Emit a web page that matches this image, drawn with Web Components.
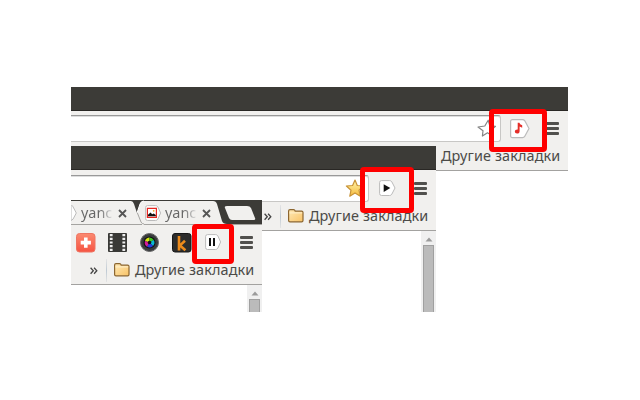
<!DOCTYPE html>
<html lang="ru"><head><meta charset="utf-8"><title>Панель браузера</title>
<style>html,body{margin:0;background:#fff;width:640px;height:400px;overflow:hidden;font-family:"Noto Sans","Open Sans",sans-serif}</style></head>
<body><desk-top></desk-top>
<script>
const ICONS={
menu:[13,13,'<g fill="#51504d"><rect width="13" height="3" rx="1"/><rect y="5" width="13" height="3" rx="1"/><rect y="10" width="13" height="3" rx="1"/></g>'],
note:[20,20,'<path d="M2.5 .6H12.5Q14 .6 14.8 1.8L19 9.5 14.8 17.2Q14 18.6 12.5 18.6H2.5Q.6 18.6.6 16.6V2.6Q.6.6 2.5.6Z" fill="#fff" stroke="#bbb" stroke-width="1.2"/><path d="M7.7 3.7H9.4Q9.6 5.4 12.2 6.2V8.7L9.6 7.6V12Q9.6 14.6 7 14.6 4.8 14.6 4.8 12.5 4.8 10.2 7.7 10.4Z" fill="#e52e28"/>'],
play:[17,17,'<path d="M2.5.6H10.6Q12 .6 12.8 1.8L16 8 12.8 14.2Q12 15.5 10.6 15.5H2.5Q.6 15.5.6 13.5V2.6Q.6.6 2.5.6Z" fill="#fff" stroke="#bbb"/><path d="M4.7 4.3V12L11.3 8.1Z" fill="#111"/>'],
pause:[17,17,'<path d="M2.5.6H10.6Q12 .6 12.8 1.8L15.6 8 12.8 14.2Q12 15.5 10.6 15.5H2.5Q.6 15.5.6 13.5V2.6Q.6.6 2.5.6Z" fill="#fff" stroke="#bbb"/><path d="M4 4h2v8H4zM8 4h2v8H8z" fill="#111"/>'],
star:[20,19,'<path d="M11.2 1.2 12.8 6.8 18.5 7.3 14.2 11 15.6 16.9 10.5 13.8 5.4 17 6 11.7 1 8 7.8 7Z" fill="#fff" stroke="#858585" stroke-width="1.2" stroke-linejoin="round"/>'],
gold:[20,19,'<defs><linearGradient id="g" x2="0" y2="1"><stop stop-color="#fff6ad"/><stop offset="1" stop-color="#f5b93c"/></linearGradient></defs><path d="M10 1 12.3 6.5 18.4 7 14 11.2 15.3 17.2 10 14 4.8 17.2 6 11.2 1.4 7 7.6 6.5Z" fill="url(#g)" stroke="#c89236" stroke-width="1.2" stroke-linejoin="round"/>'],
folder:[16,14,'<defs><linearGradient id="f" x2="1" y2="1"><stop stop-color="#ffeab7"/><stop offset="1" stop-color="#f8c265"/></linearGradient></defs><path d="M.6 2Q.6.6 2 .6H5.6Q6.8.6 7.2 2.2H13.6Q15 2.2 15 3.6V11.4Q15 12.8 13.6 12.8H2Q.6 12.8.6 11.4Z" fill="url(#f)" stroke="#8c6630" stroke-width="1.2"/><path d="M1.4 3.9H14.2" stroke="#fff0cb"/>'],
plus:[20,20,'<defs><linearGradient id="p" x2="0" y2="1"><stop stop-color="#fb8a70"/><stop offset="1" stop-color="#f65342"/></linearGradient></defs><rect x=".5" y=".5" width="18.5" height="18.5" rx="3" fill="url(#p)" stroke="#ee7562"/><path d="M8 4.5h3.6v3.3h3.3v3.6h-3.3v3.3H8v-3.3H4.7V7.8H8z" fill="#fff"/>'],
film:[20,20,'<rect width="19" height="19" rx="1" fill="#393936"/><path d="M3.2 1v17M15.8 1v17" stroke="#eee" stroke-width="2.8" stroke-dasharray="2.2 1.5"/>'],
camera:[20,20,'<circle cx="9.5" cy="9.5" r="9" fill="#3a3c3e" stroke="#666"/><circle cx="9.5" cy="9.5" r="6" fill="#111"/><path d="M9.5 9.5V4.5A5 5 0 0 0 5 8Z" fill="#d6e512"/><path d="M9.5 9.5V4.5A5 5 0 0 1 13.7 7Z" fill="#41c823"/><path d="M9.5 9.5 13.7 7A5 5 0 0 1 13 13Z" fill="#09b7d2"/><path d="M9.5 9.5 13 13A5 5 0 0 1 7 13.7Z" fill="#263de0"/><path d="M9.5 9.5 7 13.7A5 5 0 0 1 5 8Z" fill="#d51b9b"/><circle cx="9.5" cy="9.5" r="1.8" fill="#111"/>'],
k:[20,20,'<rect x=".5" y=".5" width="18.5" height="18.5" rx="2.5" fill="#2d2d2c" stroke="#171717"/><path d="M7 3V17.5M13 7.8 8 12.4 13.4 17.3" fill="none" stroke="#ed8b1b" stroke-width="2.6"/>'],
pic:[17,17,'<path d="M2.5.6H10.6Q12 .6 12.8 1.8L15.6 8 12.8 14.2Q12 15.5 10.6 15.5H2.5Q.6 15.5.6 13.5V2.6Q.6.6 2.5.6Z" fill="#fff" stroke="#bbb"/><path d="M2.4 3.4h9v9h-9z" fill="#fff" stroke="#e52620" stroke-width="1.2"/><path d="M3 11.3V9.8L5.5 7.5 7.2 9.3 8.7 8.5 10.8 10V11.3Z" fill="#111"/><circle cx="8.7" cy="5.8" r=".9" fill="#eda52c"/>'],
edge:[6,17,'<path d="M0 0H.5Q1.5.5 2 1.8L5.3 8 2 14.2 0 15.5Z" fill="#fff" stroke="#bbb"/>'],
close:[9,9,'<path d="M1 1 8 8M8 1 1 8" stroke="#555" stroke-width="1.8"/>'],
chev:[8,8,'<path d="M.6.8 3.3 3.8.6 6.8M4.1.8 6.8 3.8 4.1 6.8" fill="none" stroke="#444" stroke-width="1.3"/>'],
up:[8,5,'<path d="M4 .5 7.5 4.5H.5Z" fill="#9b9b9b"/>']};
const def=(n,f)=>customElements.define(n,class extends HTMLElement{connectedCallback(){if(!this.shadowRoot)this.attachShadow({mode:'open'}).innerHTML=f(this)}});
def('ui-icon',e=>{const[w,h,p]=ICONS[e.getAttribute('name')];return`<style>:host{display:block;flex:none}svg{display:block}</style><svg width="${w}" height="${h}" viewBox="0 0 ${w} ${h}">${p}</svg>`});
def('tool-bar',()=>`<style>:host{display:flex;height:31px;padding-right:9px;box-sizing:border-box;align-items:flex-start;justify-content:flex-end;background:#f1f0ee}</style><slot></slot>`);
def('omni-box',()=>`<style>:host{display:flex;flex:1;box-sizing:border-box;height:27px;margin-top:4px;padding:3px 3px 0 0;justify-content:flex-end;background:#fff;border:1px solid #c8c7c5;border-left:0;border-top-color:#999;border-radius:0 3px 3px 0;box-shadow:inset 0 1px #ddd}</style><slot></slot>`);
def('book-marks',e=>`<style>:host{display:flex;height:29px;box-sizing:border-box;border-bottom:1px solid #a3a2a0;background:#f1f0ee;padding-right:8px;align-items:flex-start;justify-content:flex-end;color:#4c4b48;font-size:14.4px}
span{line-height:20px;padding-top:4px;width:119px;white-space:nowrap;letter-spacing:.13px}i{width:1px;height:23px;margin:3px 7px 0 8px;background:linear-gradient(#e4e4e4,#bfcad4,#e4e4e4)}.c{margin-top:11px}.f{margin:7px 5px 0 0}</style>${e.hasAttribute('folder')?'<ui-icon class="c" name="chev"></ui-icon><i></i><ui-icon class="f" name="folder"></ui-icon>':''}<span><slot></slot></span>`);
def('scroll-page',()=>`<style>:host{display:flex;flex:1;justify-content:flex-end;background:#fff}div{width:15px;display:flex;flex-direction:column;align-items:center;background:#f0f0f0;padding-top:6px;box-sizing:border-box}b{flex:1;width:11px;margin-top:3px;background:#bbb;border:1px solid #a0a0a0;border-bottom:0;box-sizing:border-box}</style><div><ui-icon name="up"></ui-icon><b></b></div>`);
def('tab-strip',()=>`<style>:host{display:grid;height:25px;background:#3c3b37}svg,.r{grid-area:1/1}.r{display:flex;align-items:flex-start;font-size:14.4px}span{line-height:20px;margin-top:3px;width:31px;overflow:hidden;white-space:nowrap;background:linear-gradient(90deg,#666 60%,#ddd);-webkit-background-clip:text;color:transparent}.x{margin:9px 0 0 6px}.a{margin:5px 4px 0 0}.b{margin:5px 3px 0 18px}</style>
<svg width="191" height="25"><path d="M0 1H60Q62 1 63 4L66 13 69 4Q70 1 73 1H142Q145 1 146 4L151 21Q152 24 156 24H191V25H0Z" fill="#f1f0ee"/><path d="M66 12 70 22Q71 24 73 24M0 24.5H71M73 24.5H191" fill="none" stroke="#a5a4a1"/><path d="M66 13 69 4Q70 1 73 1" fill="none" stroke="#fff"/><path d="M156 6H176Q179 6 180 8L184 18Q185 20 182 20H161Q159 20 158 18L154 8Q153 6 156 6Z" fill="#f1f0ee"/></svg>
<div class="r"><ui-icon class="a" name="edge"></ui-icon><span>yanc</span><ui-icon class="x" name="close"></ui-icon><ui-icon class="b" name="pic"></ui-icon><span>yanc</span><ui-icon class="x" name="close"></ui-icon></div>`);
def('title-bar',()=>`<style>:host{display:block;height:24px;box-sizing:border-box;background:#3c3b37;border-bottom:1px solid #292724}</style>`);
def('browser-window',()=>`<style>:host{display:flex;flex-direction:column;overflow:hidden;background:#fff}</style><slot></slot>`);
def('mark-box',()=>`<style>:host{display:block;box-sizing:border-box;border:5px solid #fe0000;border-radius:4px}</style>`);
def('desk-top',()=>`<style>:host{display:block;position:relative;width:640px;height:400px}browser-window,mark-box{position:absolute}
.w1{left:71px;top:87px;width:497px;height:84px}.w2{left:71px;top:146px;width:365px;height:166px}.w3{left:71px;top:200px;width:191px;height:112px}
.m1{left:489px;top:109px;width:58px;height:43px}.m2{left:360px;top:167px;width:54px;height:46px}.m3{left:192px;top:224px;width:42px;height:40px}
.n{margin:8px 16px 0 9px}.p{margin:9px 18px 0 10px}.e{margin:8px 12px 0 0}.s{margin:9px 18px 0 1px}</style>
<browser-window class="w1"><title-bar></title-bar><tool-bar><omni-box><ui-icon name="star"></ui-icon></omni-box><ui-icon class="n" name="note"></ui-icon><ui-icon name="menu" style="margin-top:11px"></ui-icon></tool-bar><book-marks>Другие закладки</book-marks></browser-window>
<browser-window class="w2"><title-bar></title-bar><tool-bar style="height:32px;padding-top:1px"><omni-box><ui-icon name="gold"></ui-icon></omni-box><ui-icon class="p" name="play"></ui-icon><ui-icon name="menu" style="margin-top:11px"></ui-icon></tool-bar><book-marks folder>Другие закладки</book-marks><scroll-page></scroll-page></browser-window>
<browser-window class="w3"><tab-strip></tab-strip><tool-bar><ui-icon class="e" name="plus"></ui-icon><ui-icon class="e" name="film"></ui-icon><ui-icon class="e" name="camera"></ui-icon><ui-icon class="e" name="k"></ui-icon><ui-icon class="s" name="pause"></ui-icon><ui-icon name="menu" style="margin-top:11px"></ui-icon></tool-bar><book-marks folder>Другие закладки</book-marks><scroll-page></scroll-page></browser-window>
<mark-box class="m1"></mark-box><mark-box class="m2"></mark-box><mark-box class="m3"></mark-box>`);
</script></body></html>
